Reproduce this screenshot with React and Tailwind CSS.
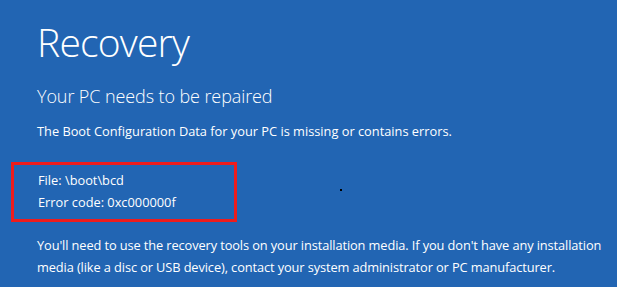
import React from 'react';

function App() {
  return (
    <div
      className="relative w-[617px] h-[287px] overflow-hidden bg-[#2265b3] text-white"
      style={{ fontFamily: '"Open Sans", "Noto Sans", sans-serif' }}
    >
      <div className="pl-[37px] pt-[16px]">
        <h1 className="text-[39px] leading-[52px] font-light tracking-[-0.8px]">Recovery</h1>
        <h2 className="mt-[15px] text-[18px] leading-[26px] font-light tracking-[-0.1px]">Your PC needs to be repaired</h2>
        <p className="mt-[12px] text-[12.8px] leading-[20px] whitespace-nowrap">
          The Boot Configuration Data for your PC is missing or contains errors.
        </p>

        {/* highlighted error details */}
        <div className="mt-[21px] -ml-[26px] w-[226px] border-[3px] border-[#ee1c1c] pl-[24px] pt-[4px] pb-[6px]">
          <p className="text-[12.8px] leading-[22px]">File: \boot\bcd</p>
          <p className="text-[12.8px] leading-[22px]">Error code: 0xc000000f</p>
        </div>

        <p className="mt-[12px] text-[12.8px] leading-[22px] whitespace-nowrap tracking-[-0.1px]">
          You'll need to use the recovery tools on your installation media. If you don't have any installation
          <br />
          media (like a disc or USB device), contact your system administrator or PC manufacturer.
        </p>
      </div>
      <span className="absolute left-[340px] top-[189px] w-[2px] h-[2px] bg-black" />
    </div>
  );
}

export default App;
